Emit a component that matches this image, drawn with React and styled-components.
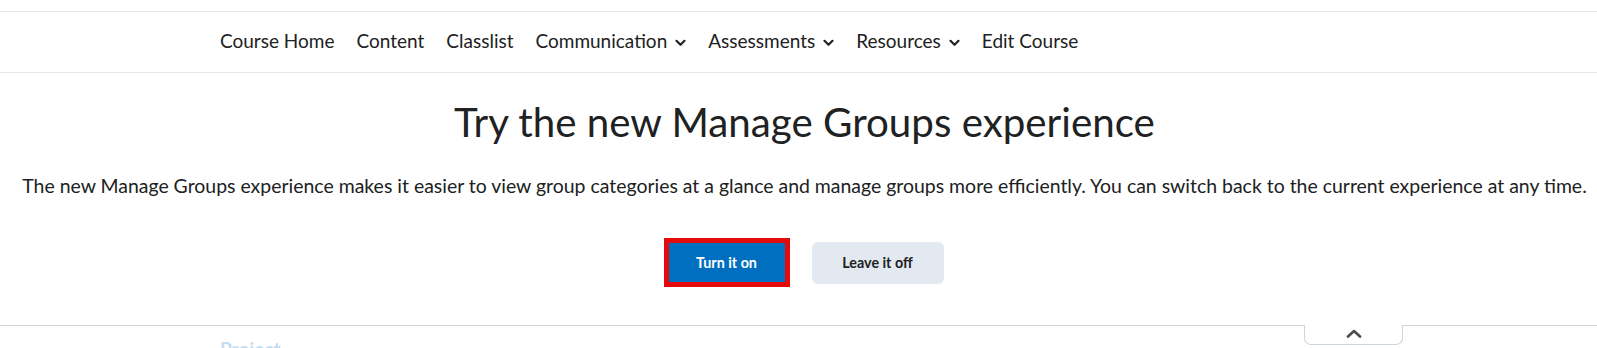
import React from "react";
import styled, { createGlobalStyle } from "styled-components";

const Global = createGlobalStyle`
  html, body { margin: 0; padding: 0; background: #ffffff; }
  body { font-family: Lato, "Open Sans", sans-serif; color: #202122; overflow: hidden; }
  * { box-sizing: border-box; }
`;

const Page = styled.div`
  width: 1597px;
  height: 348px;
  display: flex;
  flex-direction: column;
  overflow: hidden;
`;

const TopBar = styled.div`
  height: 12px;
  border-bottom: 1px solid #e6e6e6;
  flex: none;
`;

const NavBar = styled.nav`
  height: 61px;
  flex: none;
  border-bottom: 1px solid #e6e6e6;
  display: flex;
  align-items: center;
  gap: 22px;
  padding-left: 220px;
  padding-bottom: 4px;
`;

const NavItem = styled.a`
  display: inline-flex;
  align-items: center;
  gap: 8px;
  font-size: 19px;
  line-height: 23px;
  color: #202122;
  text-decoration: none;
  white-space: nowrap;
`;

const Chevron = styled.svg`
  width: 11px;
  height: 8px;
  margin-top: 5px;
  flex: none;
`;

const Main = styled.main`
  flex: none;
  display: flex;
  flex-direction: column;
  align-items: center;
  padding-top: 25px;
  height: 252px;
  padding-left: 12px;
`;

const Heading = styled.h1`
  margin: 0;
  font-weight: 400;
  font-size: 40.3px;
  line-height: 48px;
  color: #202122;
`;

const Lead = styled.p`
  margin: 28px 0 0;
  font-size: 19.45px;
  line-height: 23px;
  color: #202122;
  white-space: nowrap;
`;

const Actions = styled.div`
  display: flex;
  align-items: center;
  gap: 22px;
  margin-top: 41px;
  margin-left: -2px;
`;

const Highlight = styled.div`
  border: 5px solid #e50a0a;
  display: flex;
`;

const Button = styled.button`
  font-family: Lato, "Open Sans", sans-serif;
  font-weight: 700;
  font-size: 14.3px;
  border: none;
  cursor: pointer;
  height: ${(p) => (p.$primary ? "39px" : "42px")};
  width: ${(p) => (p.$primary ? "116px" : "132px")};
  border-radius: ${(p) => (p.$primary ? "0" : "6px")};
  background: ${(p) => (p.$primary ? "#006fbf" : "#e3e9f1")};
  color: ${(p) => (p.$primary ? "#ffffff" : "#202122")};
`;

const Footer = styled.div`
  position: relative;
  flex: 1;
  border-top: 1px solid #cdd5dc;
  padding: 11px 0 0 220px;
`;

const Faded = styled.span`
  font-size: 19px;
  line-height: 23px;
  font-weight: 700;
  color: #c4ddf2;
`;

const Tab = styled.button`
  position: absolute;
  top: -1px;
  left: 1304px;
  width: 99px;
  height: 20px;
  background: #ffffff;
  border: 1px solid #cdd5dc;
  border-top: none;
  border-radius: 0 0 7px 7px;
  display: flex;
  align-items: center;
  justify-content: center;
  padding: 0 0 2px;
`;

const Down = () => (
  <Chevron viewBox="0 0 11 8">
    <path d="M1.5 1.8 L5.5 5.8 L9.5 1.8" fill="none" stroke="#202122" strokeWidth="2.2" strokeLinecap="round" strokeLinejoin="round" />
  </Chevron>
);

const items = [
  { label: "Course Home" },
  { label: "Content" },
  { label: "Classlist" },
  { label: "Communication", menu: true },
  { label: "Assessments", menu: true },
  { label: "Resources", menu: true },
  { label: "Edit Course" },
];

export default function App() {
  return (
    <>
      <Global />
      <Page>
        <TopBar />
        <NavBar>
          {items.map((it) => (
            <NavItem key={it.label} href="#">
              {it.label}
              {it.menu && <Down />}
            </NavItem>
          ))}
        </NavBar>
        <Main>
          <Heading>Try the new Manage Groups experience</Heading>
          <Lead>
            The new Manage Groups experience makes it easier to view group categories at a glance and manage groups more efficiently. You can switch back to the current experience at any time.
          </Lead>
          <Actions>
            <Highlight>
              <Button $primary>Turn it on</Button>
            </Highlight>
            <Button>Leave it off</Button>
          </Actions>
        </Main>
        <Footer>
          <Faded>Project</Faded>
          <Tab aria-label="Collapse">
            <svg width="16" height="9" viewBox="0 0 16 9">
              <path d="M2 7.5 L8 2 L14 7.5" fill="none" stroke="#494c4e" strokeWidth="2.6" strokeLinecap="round" strokeLinejoin="round" />
            </svg>
          </Tab>
        </Footer>
      </Page>
    </>
  );
}
